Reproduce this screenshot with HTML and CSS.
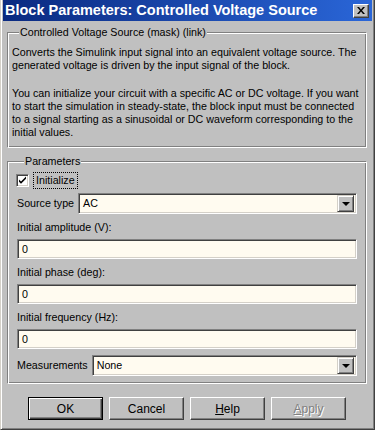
FILE: index.html
```html
<!DOCTYPE html>
<html lang="en">
<head>
    <meta charset="UTF-8">
    <meta name="viewport" content="width=device-width, initial-scale=1.0">
    <title>Block Parameters: Controlled Voltage Source</title>
    <link rel="stylesheet" href="styles.css">
</head>
<body>
    <div class="window">
        <div class="titlebar">
            <span class="title">Block Parameters: Controlled Voltage Source</span>
            <span class="close">
                <svg width="8" height="7" viewBox="0 0 8 7">
                    <path d="M0 0h2l2 2.5L6 0h2L5 3.5 8 7H6L4 4.5 2 7H0l3-3.5z" fill="#000"/>
                </svg>
            </span>
        </div>

        <div class="content">
            <fieldset class="group desc">
                <legend>Controlled Voltage Source (mask) (link)</legend>
                <p>Converts the Simulink input signal into an equivalent voltage source. The<br>
                generated voltage is driven by the input signal of the block.</p>
                <p>You can initialize your circuit with a specific AC or DC voltage. If you want<br>
                to start the simulation in steady-state, the block input must be connected<br>
                to a signal starting as a sinusoidal or DC waveform corresponding to the<br>
                initial values.</p>
            </fieldset>

            <fieldset class="group params">
                <legend>Parameters</legend>

                <div class="check-row">
                    <span class="checkbox">
                        <svg width="9" height="9" viewBox="0 0 9 9">
                            <path d="M1 3.5l2 2 5-5v2.2l-5 5-2-2z" fill="#000"/>
                        </svg>
                    </span>
                    <span class="focus">Initialize</span>
                </div>

                <div class="select-row">
                    <span class="row-label">Source type</span>
                    <div class="combo">
                        <span class="combo-value">AC</span>
                        <span class="combo-btn"><span class="arrow"></span></span>
                    </div>
                </div>

                <div class="field-label">Initial amplitude (V):</div>
                <div class="textbox">0</div>

                <div class="field-label">Initial phase (deg):</div>
                <div class="textbox">0</div>

                <div class="field-label">Initial frequency (Hz):</div>
                <div class="textbox">0</div>

                <div class="select-row measure">
                    <span class="row-label">Measurements</span>
                    <div class="combo">
                        <span class="combo-value">None</span>
                        <span class="combo-btn"><span class="arrow"></span></span>
                    </div>
                </div>
            </fieldset>

            <div class="buttons">
                <button class="btn default">OK</button>
                <button class="btn">Cancel</button>
                <button class="btn"><u>H</u>elp</button>
                <button class="btn disabled"><u>A</u>pply</button>
            </div>
        </div>
    </div>
</body>
</html>
```

FILE: styles.css
```css
* {
    box-sizing: border-box;
}

body {
    margin: 0;
    padding: 0;
    background-color: #c0c0c0;
    font-family: "Liberation Sans", Arial, sans-serif;
    font-size: 10.7px;
    line-height: 13px;
    color: #000;
}

.window {
    width: 375px;
    height: 430px;
    padding: 0 2px 2px 2px;
    background-color: #c0c0c0;
    border: 1px solid;
    border-color: #d4d0c8 #404040 #404040 #d4d0c8;
    border-top: none;
    box-shadow: inset 1px 0 #fff, inset -1px -1px #808080;
}

/* title bar */
.titlebar {
    height: 21px;
    display: flex;
    align-items: center;
    justify-content: space-between;
    padding: 0 3px 0 2px;
    background: linear-gradient(to right, #0a2a80, #2a66d8);
}

.title {
    color: #fff;
    font-weight: bold;
    font-size: 14.5px;
    white-space: nowrap;
}

.close {
    width: 16px;
    height: 14px;
    display: flex;
    align-items: center;
    justify-content: center;
    background: #c0c0c0;
    border: 1px solid;
    border-color: #fff #404040 #404040 #fff;
    box-shadow: inset -1px -1px #808080;
}

.content {
    padding: 5px 5px 0 4px;
}

/* group boxes */
.group {
    margin: 0;
    border: 1px solid #808080;
    border-right-color: #fff;
    border-bottom-color: #fff;
    box-shadow: inset 1px 1px #fff, inset -1px -1px #808080;
}

.group legend {
    margin-left: 7px;
    padding: 0 1px;
    background: #c0c0c0;
    line-height: 13px;
}

.desc {
    padding: 7px 4px 8px 4px;
}

.desc p {
    margin: 0;
    white-space: nowrap;
}

.desc p + p {
    margin-top: 15px;
}

.params {
    margin-top: 7px;
    padding: 4px 9px 7px 9px;
}

/* checkbox row */
.check-row {
    display: flex;
    align-items: center;
    height: 17px;
    margin-left: -1px;
}

.checkbox {
    width: 13px;
    height: 13px;
    display: flex;
    align-items: center;
    justify-content: center;
    background: #fff;
    border: 1px solid;
    border-color: #808080 #fff #fff #808080;
    box-shadow: inset 1px 1px #404040, inset -1px -1px #d4d0c8;
}

.focus {
    margin-left: 4px;
    padding: 1px 2px;
    border: 1px dotted #000;
}

/* combo boxes */
.select-row {
    display: flex;
    align-items: center;
    margin-top: 4px;
    gap: 4px;
}

.combo {
    flex: 1;
    height: 21px;
    display: flex;
    align-items: center;
    background: #fffbf0;
    border: 1px solid;
    border-color: #808080 #fff #fff #808080;
    box-shadow: inset 1px 1px #404040, inset -1px -1px #d4d0c8;
    padding: 2px;
}

.combo-value {
    flex: 1;
    padding-left: 2px;
}

.combo-btn {
    width: 17px;
    height: 17px;
    display: flex;
    align-items: center;
    justify-content: center;
    background: #c0c0c0;
    border: 1px solid;
    border-color: #d4d0c8 #404040 #404040 #d4d0c8;
    box-shadow: inset 1px 1px #fff, inset -1px -1px #808080;
}

.arrow {
    width: 0;
    height: 0;
    border-left: 4px solid transparent;
    border-right: 4px solid transparent;
    border-top: 4px solid #000;
}

/* text fields */
.field-label {
    margin-top: 7px;
    margin-bottom: 5px;
}

.textbox {
    height: 20px;
    padding: 3px 4px;
    background: #fffbf0;
    border: 1px solid;
    border-color: #808080 #fff #fff #808080;
    box-shadow: inset 1px 1px #404040, inset -1px -1px #d4d0c8;
}

.measure {
    margin-top: 6px;
}

/* bottom buttons */
.buttons {
    display: flex;
    justify-content: center;
    gap: 6px;
    margin-top: 13px;
}

.btn {
    width: 75px;
    height: 23px;
    padding: 0;
    font-family: inherit;
    font-size: 12px;
    color: #000;
    background: #c0c0c0;
    border: 1px solid;
    border-color: #fff #404040 #404040 #fff;
    box-shadow: inset -1px -1px #808080;
}

.btn.default {
    border: 1px solid #000;
    box-shadow: inset 1px 1px #fff, inset -1px -1px #404040, inset -2px -2px #808080;
}

.btn.disabled {
    color: #808080;
    text-shadow: 1px 1px #fff;
}
```
